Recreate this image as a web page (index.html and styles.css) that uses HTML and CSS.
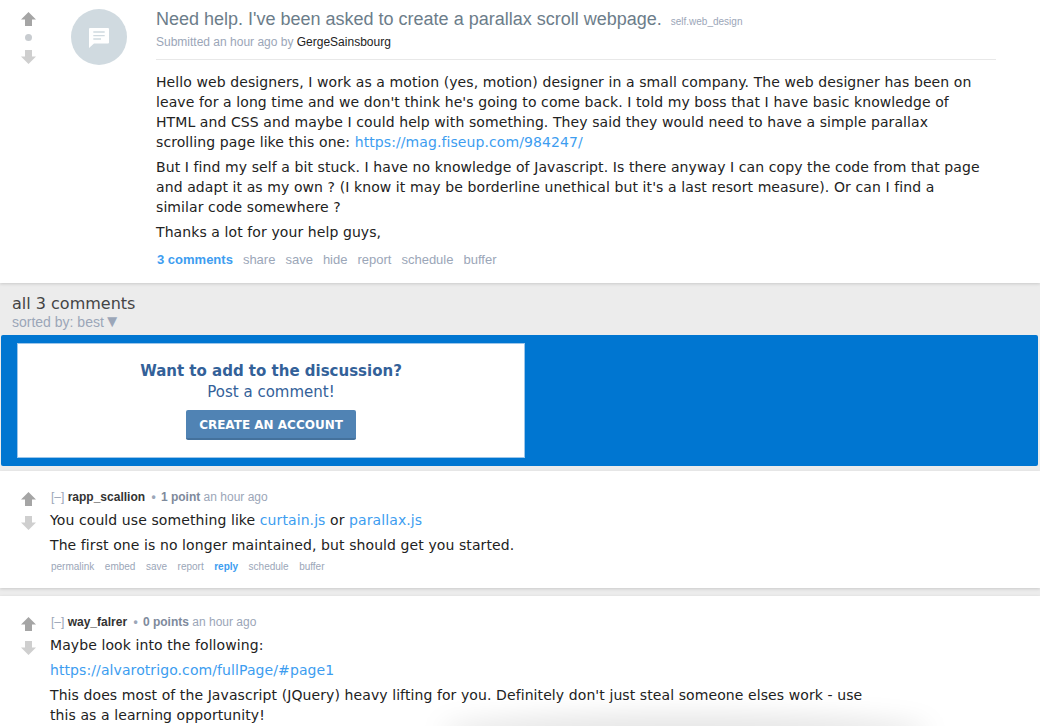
FILE: index.html
```html
<!DOCTYPE html>
<html lang="en">
<head>
  <meta charset="UTF-8"/>
  <meta name="viewport" content="width=device-width, initial-scale=1.0"/>
  <title>Need help. I've been asked to create a parallax scroll webpage.</title>
  <link rel="stylesheet" href="styles.css">
</head>
<body>
  <!-- ========== POST ========== -->
  <section class="post">
    <div class="votes post-votes">
      <svg class="arrow" viewBox="0 0 15 14"><path class="up" d="M7.5 0L15 7.5H11V14H4V7.5H0z"/></svg>
      <span class="score-dot"></span>
      <svg class="arrow" viewBox="0 0 15 14"><path class="down" d="M4 0H11V6.5H15L7.5 14L0 6.5H4z"/></svg>
    </div>
    <div class="thumb">
      <svg viewBox="0 0 20 20"><path d="M1 0H19a1 1 0 0 1 1 1V14.500a1 1 0 0 1-1 1H5L0 20V1a1 1 0 0 1 1-1z" fill="#fff"/><path d="M4.300 4H15.700M4.300 7.600H15.700M4.300 11H12" stroke="#d0dae0" stroke-width="1.300" fill="none"/></svg>
    </div>
    <div class="post-main">
      <div class="post-head">
        <h1 class="post-title">Need help. I've been asked to create a parallax scroll webpage. <span class="domain">self.web_design</span></h1>
        <p class="tagline">Submitted an hour ago by <span class="author">GergeSainsbourg</span></p>
      </div>
      <div class="usertext post-text">
        <p>Hello web designers, I work as a motion (yes, motion) designer in a small company. The web designer has been on leave for a long time and we don't think he's going to come back. I told my boss that I have basic knowledge of HTML and CSS and maybe I could help with something. They said they would need to have a simple parallax scrolling page like this one: <a href="#">https://mag.fiseup.com/984247/</a></p>
        <p>But I find my self a bit stuck. I have no knowledge of Javascript. Is there anyway I can copy the code from that page and adapt it as my own ? (I know it may be borderline unethical but it's a last resort measure). Or can I find a similar code somewhere ?</p>
        <p>Thanks a lot for your help guys,</p>
      </div>
      <ul class="post-links">
        <li><a class="strong" href="#">3 comments</a></li>
        <li><a href="#">share</a></li>
        <li><a href="#">save</a></li>
        <li><a href="#">hide</a></li>
        <li><a href="#">report</a></li>
        <li><a href="#">schedule</a></li>
        <li><a href="#">buffer</a></li>
      </ul>
    </div>
  </section>

  <!-- ========== COMMENTS ========== -->
  <div class="comments-head">
    <h2>all 3 comments</h2>
    <p class="sorted">sorted by: best<span class="caret">▼</span></p>
  </div>

  <div class="signup">
    <div class="signup-box">
      <h3>Want to add to the discussion?</h3>
      <p>Post a comment!</p>
      <a class="signup-btn" href="#">CREATE AN ACCOUNT</a>
    </div>
  </div>

  <article class="comment first">
    <div class="votes">
      <svg class="arrow" viewBox="0 0 15 14"><path class="up" d="M7.5 0L15 7.5H11V14H4V7.5H0z"/></svg>
      <svg class="arrow" viewBox="0 0 15 14"><path class="down" d="M4 0H11V6.500H15L7.500 14L0 6.500H4z"/></svg>
    </div>
    <div class="comment-main">
      <p class="comment-meta"><span class="toggle">[–]</span> <span class="author">rapp_scallion</span> <span class="bullet">•</span> <span class="points">1 point</span> an hour ago</p>
      <div class="usertext">
        <p>You could use something like <a href="#">curtain.js</a> or <a href="#">parallax.js</a></p>
        <p>The first one is no longer maintained, but should get you started.</p>
      </div>
      <ul class="comment-links">
        <li><a href="#">permalink</a></li>
        <li><a href="#">embed</a></li>
        <li><a href="#">save</a></li>
        <li><a href="#">report</a></li>
        <li><a class="strong" href="#">reply</a></li>
        <li><a href="#">schedule</a></li>
        <li><a href="#">buffer</a></li>
      </ul>
    </div>
  </article>

  <article class="comment">
    <div class="votes">
      <svg class="arrow" viewBox="0 0 15 14"><path class="up" d="M7.5 0L15 7.5H11V14H4V7.5H0z"/></svg>
      <svg class="arrow" viewBox="0 0 15 14"><path class="down" d="M4 0H11V6.500H15L7.500 14L0 6.500H4z"/></svg>
    </div>
    <div class="comment-main">
      <p class="comment-meta"><span class="toggle">[–]</span> <span class="author">way_falrer</span> <span class="bullet">•</span> <span class="points">0 points</span> an hour ago</p>
      <div class="usertext">
        <p>Maybe look into the following:</p>
        <p><a href="#">https://alvarotrigo.com/fullPage/#page1</a></p>
        <p>This does most of the Javascript (JQuery) heavy lifting for you. Definitely don't just steal someone elses work - use this as a learning opportunity!</p>
      </div>
    </div>
  </article>

  <div class="bottom-shadow"></div>
</body>
</html>
```

FILE: styles.css
```css
*{margin:0;padding:0;box-sizing:border-box}
html,body{height:726px;overflow:hidden}
body{font-family:'Liberation Sans',Arial,sans-serif;background:#ececec;color:#222;position:relative}
a{text-decoration:none;color:#369}
ul{list-style:none}

/* post */
.post{display:flex;background:#fff;height:283px;box-shadow:0 1px 3px rgba(0,0,0,.15);position:relative}
.votes{width:15px;display:flex;flex-direction:column;align-items:center}
.arrow{width:15px;height:14px;display:block}
.up{fill:#a5a5a5}
.down{fill:#cfcfcf}
.post-votes{margin:12px 0 0 21px}
.score-dot{width:7px;height:7px;border-radius:50%;background:#c8ccd0;margin:8px 0 9px}
.thumb{width:56px;height:56px;margin:9px 0 0 35px;border-radius:50%;background:#d0dae0;display:flex;align-items:center;justify-content:center}
.thumb svg{width:20px;height:20px;margin-top:2px}
.post-main{margin-left:29px;width:840px}
.post-head{padding-top:9px;height:60px;border-bottom:1px solid #e8e8e8}
.post-title{font-size:18px;font-weight:400;line-height:21px;color:#6c7d8a}
.domain{font-size:10px;color:#9ba6b8;margin-left:4px}
.tagline{font-size:12px;line-height:14px;margin-top:3px;color:#9ba6b8}
.author{color:#222}

.usertext{font-family:'DejaVu Sans',Verdana,sans-serif;font-size:14px;line-height:20px;letter-spacing:.09px;color:#222}
.usertext a{color:#3d9df0}
.post-text{padding-top:12px;width:828px}
.post-text p{margin-bottom:5px}
.post-links{display:flex;gap:10px;margin-top:10px;font-size:13px;line-height:16px}
.post-links a{color:#9ba6b8}
.post-links a.strong,.comment-links a.strong{color:#3d9df0;font-weight:700}
.post-links li:first-child{margin-left:1px}

/* comments */
.comments-head{height:52px;padding:12px 12px 0}
.comments-head h2{font-family:'DejaVu Sans',Verdana,sans-serif;font-size:16px;font-weight:400;line-height:18px;color:#444}
.sorted{font-size:14px;line-height:14px;margin-top:2px;color:#9ba6b8}
.caret{font-size:17px;line-height:14px;vertical-align:top}

.signup{margin:0 2px 0 1px;height:131px;background:#0076d1;border-radius:2px;padding:8px 0 0 16px}
.signup-box{width:508px;height:115px;background:#fff;border:1px solid #9cc6ea;text-align:center;padding-top:17px;font-family:'DejaVu Sans',Verdana,sans-serif;color:#336199}
.signup-box h3{font-size:15px;line-height:20px}
.signup-box p{font-size:15px;line-height:20px;margin-top:1px}
.signup-btn{display:inline-block;margin-top:8px;width:170px;height:30px;line-height:30px;background:#5083b4;border-bottom:2px solid #44719c;border-radius:2px;color:#fff;font-size:12px;font-weight:700}

.comment{display:flex;background:#fff;box-shadow:0 1px 3px rgba(0,0,0,.15);padding:19px 0 0 21px;height:117px;margin-bottom:8px}
.comment.first{margin-top:5px}
.comment:last-of-type{height:140px;margin-bottom:0}
.comment .votes{padding-top:2px}
.comment .arrow + .arrow{margin-top:10px}
.comment-main{margin-left:15px;width:820px}
.comment-meta{font-size:12px;line-height:14px;color:#9ba6b8}
.comment-meta .author{font-weight:700;color:#333}
.points{font-weight:700;color:#7e8a9c}
.toggle{color:#9ba6b8}
.bullet{font-weight:700;margin:0 2px 0 3px}
.comment .usertext{margin:6px 0 0 -1px}
.comment .usertext p{margin-bottom:5px}
.comment-links{display:flex;gap:10.500px;margin-top:6px;font-size:10px;line-height:12px}
.comment-links a{color:#9ba6b8}

.bottom-shadow{position:absolute;left:440px;bottom:-22px;width:490px;height:34px;border-radius:50%;background:rgba(0,0,0,.1);filter:blur(12px)}
```
